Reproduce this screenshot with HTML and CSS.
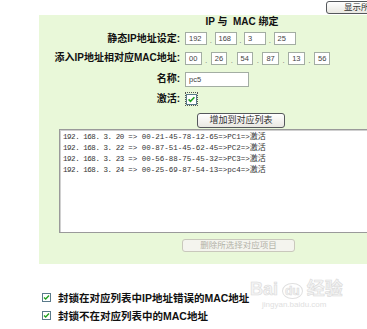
FILE: index.html
```html
<!DOCTYPE html>
<html>
<head>
<meta charset="utf-8">
<link rel="stylesheet" href="styles.css">
</head>
<body>
<div class="page">
  <div class="topbar"><button class="btn top-btn">显示所有</button></div>
  <div class="panel">
    <div class="title">IP 与&nbsp; MAC 绑定</div>
    <div class="form">
      <div class="label">静态IP地址设定:</div>
      <div class="field">
        <span class="box ip">192</span><span class="dot">.</span><span class="box ip">168</span><span class="dot">.</span><span class="box ip">3</span><span class="dot">.</span><span class="box ip">25</span>
      </div>
      <div class="label">添入IP地址相对应MAC地址:</div>
      <div class="field">
        <span class="box mac">00</span><span class="dot mdot">.</span><span class="box mac">26</span><span class="dot mdot">.</span><span class="box mac">54</span><span class="dot mdot">.</span><span class="box mac">87</span><span class="dot mdot">.</span><span class="box mac">13</span><span class="dot mdot">.</span><span class="box mac">56</span>
      </div>
      <div class="label">名称:</div>
      <div class="field"><span class="box name">pc5</span></div>
      <div class="label">激活:</div>
      <div class="field">
        <span class="focus">
          <svg class="chk" width="11" height="11" viewBox="0 0 11 11"><rect x="0.5" y="0.5" width="10" height="10" fill="#fff" stroke="#5a7a8a"/><path d="M2.6 5.4 L4.5 7.4 L8.4 3.2" fill="none" stroke="#21a121" stroke-width="1.6"/></svg>
        </span>
      </div>
    </div>
    <button class="btn add-btn">增加到对应列表</button>
    <div class="list">
      <div class="line"><span class="ipt">192. 168. 3. 20</span> =&gt; 00-21-45-78-12-65=&gt;PC1=&gt;<span class="cj">激活</span></div>
      <div class="line"><span class="ipt">192. 168. 3. 22</span> =&gt; 00-87-51-45-62-45=&gt;PC2=&gt;<span class="cj">激活</span></div>
      <div class="line"><span class="ipt">192. 168. 3. 23</span> =&gt; 00-56-88-75-45-32=&gt;PC3=&gt;<span class="cj">激活</span></div>
      <div class="line"><span class="ipt">192. 168. 3. 24</span> =&gt; 00-25-69-87-54-13=&gt;pc4=&gt;<span class="cj">激活</span></div>
    </div>
    <button class="btn del-btn" disabled>删除所选择对应项目</button>
  </div>
  <div class="options">
    <div class="opt">
      <svg class="ochk" width="9" height="9" viewBox="0 0 9 9"><rect x="0.5" y="0.5" width="8" height="8" fill="#fff" stroke="#5a7a8a"/><path d="M2 4.4 L3.7 6.1 L7 2.6" fill="none" stroke="#21a121" stroke-width="1.4"/></svg>
      <span>封锁在对应列表中IP地址错误的MAC地址</span>
    </div>
    <div class="opt">
      <svg class="ochk" width="9" height="9" viewBox="0 0 9 9"><rect x="0.5" y="0.5" width="8" height="8" fill="#fff" stroke="#5a7a8a"/><path d="M2 4.4 L3.7 6.1 L7 2.6" fill="none" stroke="#21a121" stroke-width="1.4"/></svg>
      <span>封锁不在对应列表中的MAC地址</span>
    </div>
  </div>
  <div class="watermark">
    <div class="wm-main">Bai<span class="wm-du">du</span>经验</div>
    <div class="wm-sub">jingyan.baidu.com</div>
  </div>
</div>
</body>
</html>
```
FILE: styles.css
```css
html, body {
  margin: 0;
  padding: 0;
  overflow: hidden;
  background: #fff;
}
body {
  width: 367px;
  height: 329px;
  font-family: "Liberation Sans", "Noto Sans CJK SC", sans-serif;
}
.page {
  position: relative;
  width: 460px;
  height: 329px;
}
.topbar {
  height: 15px;
  padding-left: 326px;
  box-sizing: border-box;
  padding-top: 1px;
}
.btn {
  font-family: "Liberation Sans", "Noto Sans CJK SC", sans-serif;
  font-size: 8.5px;
  color: #333;
  background: linear-gradient(#ffffff, #e9e8e2);
  border: 1px solid #55585c;
  border-radius: 3px;
  padding: 0;
  margin: 0;
  line-height: 11px;
  display: block;
}
.top-btn {
  width: 70px;
  height: 13px;
}
.panel {
  margin-left: 39px;
  width: 406px;
  height: 249px;
  background: #e9f8d9;
  display: flex;
  flex-direction: column;
  align-items: center;
}
.title {
  height: 14px;
  line-height: 14px;
  font-size: 10px;
  font-weight: bold;
  color: #111;
  text-align: center;
}
.form {
  align-self: stretch;
  display: grid;
  grid-template-columns: 141px 1fr;
  grid-template-rows: 19px 20px 22px 18px;
  column-gap: 5px;
  align-items: center;
}
.label {
  text-align: right;
  font-size: 10px;
  line-height: 12px;
  font-weight: bold;
  color: #111;
  white-space: nowrap;
}
.field {
  display: flex;
  align-items: center;
}
.box {
  box-sizing: border-box;
  display: block;
  background: #fff;
  border: 1px solid #a3ada3;
  font-size: 7.5px;
  color: #444;
  padding-left: 3px;
  line-height: 11px;
  height: 13px;
}
.ip { width: 22px; }
.mac { width: 16.5px; }
.name { width: 64px; height: 15px; line-height: 13px; }
.dot {
  width: 7.5px;
  text-align: center;
  font-size: 8px;
  color: #777;
  align-self: flex-end;
  line-height: 8px;
}
.mdot { width: 9.3px; }
.focus {
  display: block;
  box-sizing: border-box;
  width: 13px;
  height: 14px;
  border: 1px dotted #555;
  padding: 1px 0 0 0;
}
.chk { display: block; }
.add-btn {
  margin-top: 5px;
  width: 88px;
  height: 15px;
  line-height: 13px;
  font-size: 9px;
  margin-left: -2px;
}
.list {
  margin-top: 1px;
  align-self: stretch;
  margin-left: 20px;
  margin-right: 20px;
  height: 104px;
  box-sizing: border-box;
  background: #fff;
  border: 1px solid #9a9a9a;
  box-shadow: inset 1px 1px 0 #d0d0d0;
  padding: 1px 0 0 3px;
}
.line {
  font-family: "Liberation Mono", "Noto Sans CJK SC", monospace;
  font-size: 7.5px;
  line-height: 10px;
  color: #333;
  white-space: pre;
}
.ipt { letter-spacing: -0.45px; }
.cj {
  font-family: "Noto Sans CJK SC", sans-serif;
  font-size: 8px;
}
.del-btn {
  margin-top: 6px;
  width: 113px;
  height: 13px;
  line-height: 11px;
  font-size: 8.5px;
  margin-left: -7px;
  color: #b3b2a8;
  background: #f4f4ee;
  border: 1px solid #c9c8bc;
}
.options {
  margin-top: 24px;
  padding-left: 42px;
}
.opt {
  height: 18.5px;
  display: flex;
  align-items: center;
  gap: 7px;
  font-size: 10.5px;
  font-weight: bold;
  color: #111;
  white-space: nowrap;
}
.ochk { display: block; flex: none; }
.watermark {
  position: absolute;
  left: 250px;
  top: 278px;
  pointer-events: none;
}
.wm-main {
  font-size: 18px;
  font-weight: bold;
  line-height: 22px;
  color: #f4f4f4;
  -webkit-text-stroke: 0.6px #dadada;
}
.wm-du {
  display: inline-block;
  margin: 0 4px;
  padding: 0 2px;
  border-radius: 50%;
  border: 1px solid #e0e0e0;
  font-size: 12px;
  line-height: 14px;
}
.wm-sub {
  font-size: 8px;
  margin-left: 12px;
  color: #e0e0e0;
  line-height: 10px;
}
```
